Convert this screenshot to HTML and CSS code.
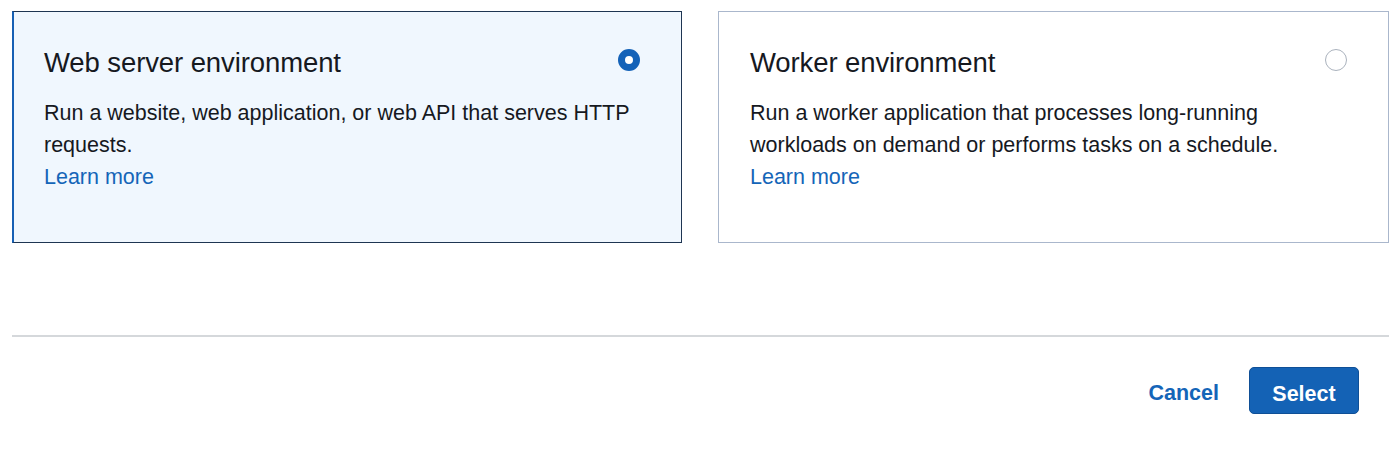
FILE: index.html
```html
<!DOCTYPE html>
<html>
<head>
<meta charset="utf-8">
<link rel="stylesheet" href="styles.css">
</head>
<body>
<div class="page">
  <div class="cards">
    <div class="card selected">
      <div class="card-head">
        <h2 class="card-title">Web server environment</h2>
        <span class="radio radio-on"></span>
      </div>
      <p class="card-desc">Run a website, web application, or web API that serves HTTP requests.</p>
      <a class="learn" href="#">Learn more</a>
    </div>
    <div class="card">
      <div class="card-head">
        <h2 class="card-title">Worker environment</h2>
        <span class="radio"></span>
      </div>
      <p class="card-desc">Run a worker application that processes long-running workloads on demand or performs tasks on a schedule.</p>
      <a class="learn" href="#">Learn more</a>
    </div>
  </div>
  <hr class="divider">
  <div class="actions">
    <a class="btn-link" href="#">Cancel</a>
    <button class="btn-primary">Select</button>
  </div>
</div>
</body>
</html>
```

FILE: styles.css
```css
html, body {
  margin: 0;
  padding: 0;
  background: #ffffff;
}
body {
  font-family: "Liberation Sans", Arial, sans-serif;
  color: #16191f;
}
.page {
  padding: 11px 11px 0 12px;
}
.cards {
  display: grid;
  grid-template-columns: 670px 671px;
  column-gap: 36px;
}
.card {
  box-sizing: border-box;
  height: 232px;
  border: 1px solid #aab7cc;
  background: #ffffff;
  padding: 32px 31px 0 31px;
}
.card.selected {
  background: #f0f7fe;
  border: 1px solid #1e3552;
  border-left: 2px solid #1760b4;
  padding-left: 30px;
}
.card-head {
  display: flex;
  justify-content: space-between;
  align-items: flex-start;
}
.card-title {
  margin: 0;
  font-weight: 400;
  font-size: 27.5px;
  line-height: 38px;
  color: #16191f;
  letter-spacing: -0.1px;
}
.radio {
  box-sizing: border-box;
  width: 22px;
  height: 22px;
  border-radius: 50%;
  border: 1.5px solid #aab2bd;
  margin-top: 5px;
  margin-right: 10px;
  background: #ffffff;
}
.radio-on {
  border: 7px solid #1462b8;
  background: #ffffff;
  margin-right: 10px;
}
.card-desc {
  margin: 15px 0 0 0;
  font-size: 21.5px;
  line-height: 32px;
  color: #16191f;
  max-width: 600px;
}
.learn {
  display: inline-block;
  font-size: 21.5px;
  line-height: 32px;
  color: #1465b8;
  text-decoration: none;
}
.divider {
  margin: 92px 0 0 0;
  border: 0;
  height: 2px;
  background: #d5d8db;
}
.actions {
  display: flex;
  justify-content: flex-end;
  align-items: center;
  gap: 30px;
  margin-top: 30px;
  padding-right: 30px;
}
.btn-link {
  font-size: 21.5px;
  font-weight: 700;
  color: #1465b8;
  text-decoration: none;
  padding-top: 6px;
}
.btn-primary {
  box-sizing: border-box;
  width: 110px;
  height: 47px;
  border: 1px solid #0f4f96;
  border-radius: 5px;
  background: #1462b5;
  color: #ffffff;
  font-family: "Liberation Sans", Arial, sans-serif;
  font-size: 21.5px;
  font-weight: 700;
  padding: 7px 0 0 0;
}
```
